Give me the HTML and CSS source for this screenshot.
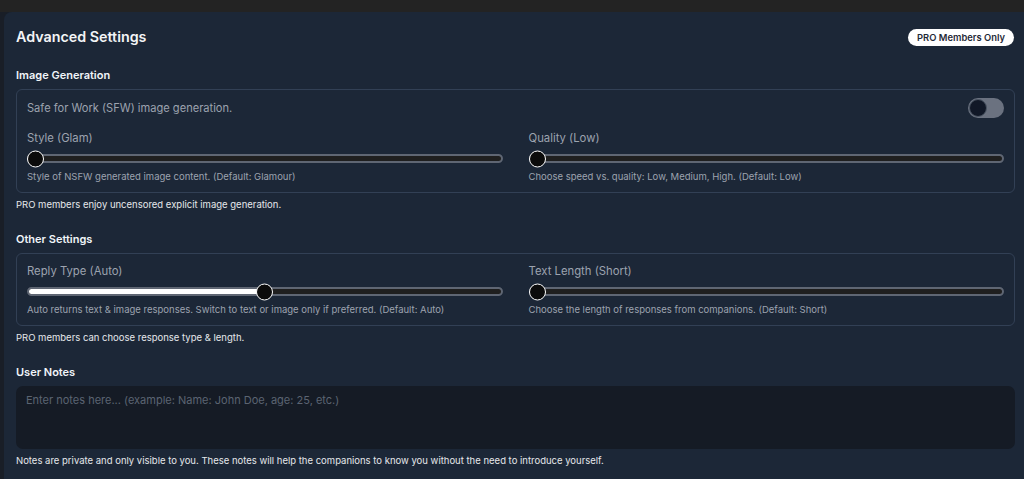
FILE: index.html
```html
<!DOCTYPE html>
<html lang="en">
<head>
<meta charset="utf-8">
<title>Advanced Settings</title>
<link rel="stylesheet" href="styles.css">
</head>
<body>
<div class="topbar"></div>
<div class="panel">
  <div class="header">
    <h2 class="title">Advanced Settings</h2>
    <span class="badge">PRO Members Only</span>
  </div>

  <h3 class="section-title first">Image Generation</h3>
  <div class="card">
    <div class="toggle-row">
      <span class="toggle-label">Safe for Work (SFW) image generation.</span>
      <span class="toggle"><span class="knob"></span></span>
    </div>
    <div class="grid">
      <div class="field">
        <div class="field-label">Style (Glam)</div>
        <div class="slider"><div class="fill" style="width:0%"></div><div class="thumb" style="left:0%"></div></div>
        <div class="help">Style of NSFW generated image content. (Default: Glamour)</div>
      </div>
      <div class="field">
        <div class="field-label">Quality (Low)</div>
        <div class="slider"><div class="fill" style="width:0%"></div><div class="thumb" style="left:0%"></div></div>
        <div class="help">Choose speed vs. quality: Low, Medium, High. (Default: Low)</div>
      </div>
    </div>
  </div>
  <p class="note">PRO members enjoy uncensored explicit image generation.</p>

  <h3 class="section-title">Other Settings</h3>
  <div class="card card-b">
    <div class="grid">
      <div class="field">
        <div class="field-label">Reply Type (Auto)</div>
        <div class="slider"><div class="fill" style="width:50%"></div><div class="thumb mid" style="left:50%"></div></div>
        <div class="help">Auto returns text &amp; image responses. Switch to text or image only if preferred. (Default: Auto)</div>
      </div>
      <div class="field">
        <div class="field-label">Text Length (Short)</div>
        <div class="slider"><div class="fill" style="width:0%"></div><div class="thumb" style="left:0%"></div></div>
        <div class="help">Choose the length of responses from companions. (Default: Short)</div>
      </div>
    </div>
  </div>
  <p class="note">PRO members can choose response type &amp; length.</p>

  <h3 class="section-title">User Notes</h3>
  <textarea class="notes" placeholder="Enter notes here... (example: Name: John Doe, age: 25, etc.)"></textarea>
  <p class="note">Notes are private and only visible to you. These notes will help the companions to know you without the need to introduce yourself.</p>
</div>
</body>
</html>
```

FILE: styles.css
```css
* { box-sizing: border-box; }
html, body { margin: 0; padding: 0; }
body {
  background: #191e27;
  font-family: Inter, "Noto Sans", "Liberation Sans", sans-serif;
  color: #f1f5f9;
  height: 479px;
  overflow: hidden;
}
.topbar {
  height: 12px;
  background: #232323;
}
.panel {
  margin-left: 4px;
  background: #1c2737;
  border-radius: 8px 0 0 0;
  padding: 15px 9px 20px 12px;
  min-height: 467px;
}
.header {
  display: flex;
  align-items: center;
  justify-content: space-between;
  height: 20px;
}
.title {
  margin: 0;
  font-size: 14.3px;
  font-weight: 600;
  line-height: 20px;
  color: #f3f4f6;
}
.badge {
  background: #ffffff;
  color: #1f2937;
  font-size: 9.4px;
  font-weight: 600;
  line-height: 17px;
  padding: 0 9px;
  border-radius: 9px;
  margin-right: 1px;
}
.section-title {
  margin: 19px 0 6px 0;
  font-size: 11px;
  font-weight: 600;
  line-height: 16px;
  color: #f1f5f9;
}
.section-title.first { margin-top: 20px; }
.card {
  border: 1px solid #324055;
  border-radius: 6px;
  padding: 8px 10px 8px 10px;
}
.card-b { padding-top: 9px; padding-bottom: 8px; }
.toggle-row {
  display: flex;
  align-items: center;
  justify-content: space-between;
  height: 20px;
  margin-bottom: 12px;
}
.toggle-label {
  font-size: 11.1px;
  color: #9ca3af;
}
.toggle {
  width: 36px;
  height: 20px;
  border-radius: 10px;
  background: #6b7280;
  display: flex;
  align-items: center;
  padding: 1px;
}
.knob {
  width: 18px;
  height: 18px;
  border-radius: 50%;
  background: #111827;
  border: 1.5px solid #4b5563;
}
.grid {
  display: grid;
  grid-template-columns: 1fr 1fr;
  column-gap: 26px;
}
.field-label {
  font-size: 11.3px;
  line-height: 16px;
  color: #9ca3af;
}
.slider {
  position: relative;
  height: 9px;
  margin: 8px 0 7px 0;
  border-radius: 5px;
  background: #1f1f1f;
  border: 2px solid #5f6673;
}
.fill {
  height: 100%;
  background: #ffffff;
  border-radius: 3px;
}
.thumb {
  position: absolute;
  top: 50%;
  width: 17px;
  height: 17px;
  margin-left: -2px;
  transform: translate(0, -50%);
  border-radius: 50%;
  background: #0b0b0b;
  border: 1.5px solid #ffffff;
}
.thumb.mid { margin-left: -9px; }
.help {
  font-size: 9.5px;
  line-height: 14px;
  color: #9ca3af;
}
.note {
  margin: 5px 0 0 0;
  font-size: 9.5px;
  line-height: 14px;
  color: #e5e7eb;
}
.notes {
  display: block;
  width: 100%;
  height: 63px;
  resize: none;
  background: #151b25;
  border: none;
  border-radius: 7px;
  padding: 6px 10px;
  font-family: Inter, "Noto Sans", "Liberation Sans", sans-serif;
  font-size: 11px;
  line-height: 16px;
  color: #e5e7eb;
}
.notes::placeholder { color: #5b6472; }
```
